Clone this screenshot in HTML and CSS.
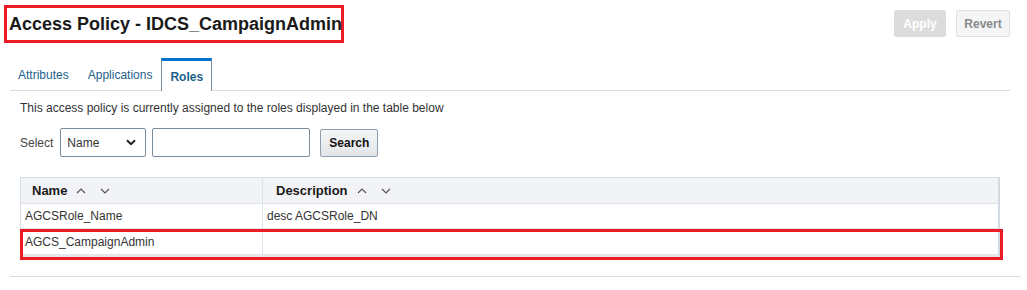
FILE: index.html
```html
<!DOCTYPE html>
<html>
<head>
<meta charset="utf-8">
<link rel="stylesheet" href="styles.css">
</head>
<body>
<div class="page">
  <div class="header">
    <h1 class="title">Access Policy - IDCS_CampaignAdmin</h1>
    <div class="actions">
      <button class="btn btn-apply">Apply</button>
      <button class="btn btn-revert">Revert</button>
    </div>
  </div>
  <div class="tabs">
    <span class="tab">Attributes</span>
    <span class="tab">Applications</span>
    <span class="tab tab-active">Roles</span>
  </div>
  <p class="intro">This access policy is currently assigned to the roles displayed in the table below</p>
  <div class="search-row">
    <span class="label">Select</span>
    <div class="select">
      <span>Name</span>
      <svg class="chev" width="10" height="7" viewBox="0 0 10 7"><path d="M1 1.2 L5 5.2 L9 1.2" fill="none" stroke="#222" stroke-width="2"/></svg>
    </div>
    <div class="input"></div>
    <button class="btn-search">Search</button>
  </div>
  <div class="table-wrap">
    <div class="table">
      <div class="row head">
        <div class="cell c1">Name
          <svg class="sort" width="10" height="6" viewBox="0 0 10 6"><path d="M1 5 L5 1 L9 5" fill="none" stroke="#555" stroke-width="1.2"/></svg>
          <svg class="sort" width="10" height="6" viewBox="0 0 10 6"><path d="M1 1 L5 5 L9 1" fill="none" stroke="#555" stroke-width="1.2"/></svg>
        </div>
        <div class="cell c2">Description
          <svg class="sort" width="10" height="6" viewBox="0 0 10 6"><path d="M1 5 L5 1 L9 5" fill="none" stroke="#555" stroke-width="1.2"/></svg>
          <svg class="sort" width="10" height="6" viewBox="0 0 10 6"><path d="M1 1 L5 5 L9 1" fill="none" stroke="#555" stroke-width="1.2"/></svg>
        </div>
      </div>
      <div class="row">
        <div class="cell c1">AGCSRole_Name</div>
        <div class="cell c2">desc AGCSRole_DN</div>
      </div>
      <div class="row last">
        <div class="cell c1">AGCS_CampaignAdmin</div>
        <div class="cell c2"></div>
      </div>
    </div>
    <div class="highlight"></div>
  </div>
  <div class="footer-line"></div>
</div>
</body>
</html>
```
FILE: styles.css
```css
* { box-sizing: border-box; }
html, body { margin: 0; padding: 0; background: #fff; }
body { font-family: "Liberation Sans", Arial, sans-serif; color: #333; }
.page { width: 1027px; height: 290px; }

.header { display: flex; justify-content: space-between; align-items: flex-start; padding: 5px 17px 0 4px; height: 58px; }
.title { margin: 0; border: 3px solid #ed1c24; width: 340px; height: 38px; padding: 0 0 0 2px; font-size: 18px; font-weight: bold; color: #1a1a1a; line-height: 33px; white-space: nowrap; }
.actions { display: flex; gap: 10px; padding-top: 5px; }
.btn { font-family: inherit; font-size: 12px; font-weight: bold; height: 27px; border-radius: 2px; padding: 0; }
.btn-apply { width: 52px; background: #dcdcdc; border: 1px solid #dcdcdc; color: #fff; }
.btn-revert { width: 54px; background: #f4f5f7; border: 1px solid #dedfe2; color: #8a8a8a; }

.tabs { display: flex; margin: 0 17px 0 10px; height: 33px; border-bottom: 1px solid #d6dfe6; align-items: flex-end; }
.tab { font-size: 12px; color: #1d5f8a; padding: 0 9px 8px 8px; line-height: 14px; }
.tab + .tab { margin-left: 2px; }
.tabs .tab-active { margin-left: 0; height: 33px; margin-bottom: -1px; background: #fff; border-top: 3px solid #0572ce; border-left: 1px solid #7a8d9e; border-right: 1px solid #7a8d9e; padding: 9px 8px 0 8px; font-weight: bold; color: #1d5f8a; }

.intro { margin: 10px 0 0 20px; font-size: 12px; line-height: 14px; color: #333; }

.search-row { display: flex; align-items: center; margin: 13px 0 0 20px; height: 29px; }
.label { font-size: 12px; color: #444; margin-right: 7px; }
.select { width: 86px; height: 29px; border: 1px solid #7a8a99; border-radius: 2px; display: flex; align-items: center; justify-content: space-between; padding: 0 9px 0 6px; font-size: 12px; color: #333; }
.input { width: 158px; height: 29px; border: 1px solid #7a8a99; border-radius: 2px; margin-left: 6px; }
.btn-search { margin-left: 10px; width: 58px; height: 28px; font-family: inherit; font-size: 12px; font-weight: bold; color: #111; background: linear-gradient(#f4f5f6, #e2e6e9); border: 1px solid #8f9fae; border-radius: 2px; padding: 0; }

.table-wrap { position: relative; margin: 20px 0 0 20px; width: 983px; height: 83px; }
.table { width: 980px; border: 1px solid #d6dfe6; border-right: 2px solid #d2d9e0; border-bottom: 3px solid #e3e6ea; }
.row { display: grid; grid-template-columns: 242px 1fr; height: 25px; border-bottom: 1px solid #dde3e9; }
.row.last { border-bottom: none; }
.row.head { height: 26px; background: #f2f3f7; }
.cell { font-size: 12px; color: #333; display: flex; align-items: center; padding-left: 4px; }
.cell.c1 { border-right: 1px solid #dde3e9; }
.head .cell { font-size: 13px; font-weight: bold; color: #1a1a1a; padding-left: 11px; }
.head .cell.c2 { padding-left: 13px; }
.sort { margin-left: 9px; }
.sort + .sort { margin-left: 14px; }
.highlight { position: absolute; left: 0; top: 52px; width: 983px; height: 31px; border: 3px solid #ed1c24; }

.footer-line { margin: 16px 0 0 10px; width: 1011px; height: 1px; background: #d6dfe6; }
```
